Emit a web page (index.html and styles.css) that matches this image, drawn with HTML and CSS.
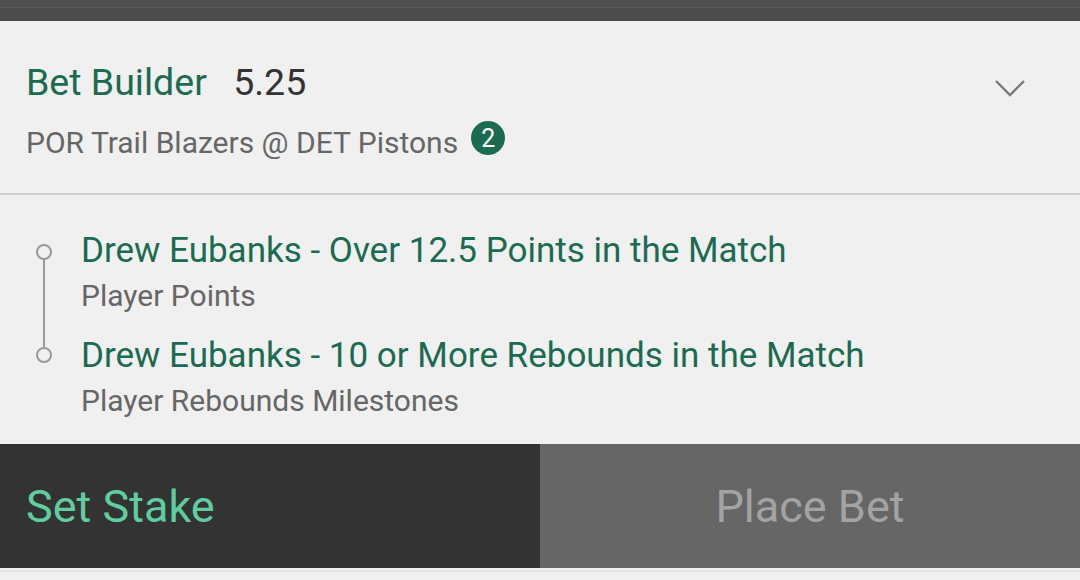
FILE: index.html
```html
<!DOCTYPE html>
<html lang="en">
<head>
  <meta charset="UTF-8" />
  <title>Bet Slip</title>
  <link rel="stylesheet" href="styles.css">
</head>
<body>
  <div class="topbar"></div>

  <div class="bet-header">
    <div class="bet-info">
      <div class="bet-title">
        <span class="bet-name">Bet Builder</span>
        <span class="bet-odds">5.25</span>
      </div>
      <div class="bet-event">
        <span>POR Trail Blazers @ DET Pistons</span>
        <span class="badge">2</span>
      </div>
    </div>
    <svg class="chevron" width="32" height="20" viewBox="0 0 32 20">
      <polyline points="2,3 16,17 30,3" fill="none" stroke="#7a7a7a" stroke-width="2.4"/>
    </svg>
  </div>

  <div class="legs">
    <div class="rail">
      <span class="dot"></span>
      <span class="rail-line"></span>
      <span class="dot"></span>
    </div>
    <div class="leg-list">
      <div class="leg">
        <div class="leg-title">Drew Eubanks - Over 12.5 Points in the Match</div>
        <div class="leg-market">Player Points</div>
      </div>
      <div class="leg">
        <div class="leg-title">Drew Eubanks - 10 or More Rebounds in the Match</div>
        <div class="leg-market">Player Rebounds Milestones</div>
      </div>
    </div>
  </div>

  <div class="actions">
    <button class="btn-stake">Set Stake</button>
    <button class="btn-place">Place Bet</button>
  </div>
  <div class="bottom-strip"></div>
</body>
</html>
```

FILE: styles.css
```css
body {
  margin: 0;
  padding: 0;
  background-color: #f0f0f0;
  font-family: Roboto, 'Noto Sans', sans-serif;
  width: 1080px;
  height: 580px;
  overflow: hidden;
}

.topbar {
  height: 21px;
  background-color: #4b4b4b;
  box-shadow: inset 0 7px 0 #505050, inset 0 8px 0 #5c5c5c;
}

.bet-header {
  display: flex;
  justify-content: space-between;
  align-items: flex-start;
  padding: 39px 54px 32px 26px;
  border-bottom: 2px solid #cfcfcf;
}

.bet-title {
  font-size: 37.5px;
  line-height: 44px;
}

.bet-name {
  color: #1b6b50;
  margin-right: 17px;
}

.bet-odds {
  color: #333333;
}

.bet-event {
  display: flex;
  align-items: flex-start;
  margin-top: 21px;
  font-size: 30px;
  line-height: 36px;
  color: #666666;
}

.badge {
  display: inline-flex;
  align-items: center;
  justify-content: center;
  width: 34px;
  height: 34px;
  margin-left: 13px;
  margin-top: -4px;
  border-radius: 50%;
  background-color: #1b6b50;
  color: #ffffff;
  font-size: 25px;
  line-height: 1;
}

.chevron {
  margin-top: 18px;
}

.legs {
  display: flex;
  padding: 35px 0 25px 36px;
}

.rail {
  display: flex;
  flex-direction: column;
  align-items: center;
  padding-top: 14px;
  margin-right: 29px;
}

.dot {
  width: 12px;
  height: 12px;
  border: 2px solid #9a9a9a;
  border-radius: 50%;
}

.rail-line {
  width: 2px;
  height: 87px;
  background-color: #9a9a9a;
}

.leg + .leg {
  margin-top: 21px;
}

.leg-title {
  font-size: 35px;
  line-height: 42px;
  color: #1b6b50;
}

.leg-market {
  margin-top: 6px;
  font-size: 30px;
  line-height: 36px;
  color: #666666;
}

.actions {
  display: grid;
  grid-template-columns: 1fr 1fr;
  height: 124px;
}

.actions button {
  border: none;
  margin: 0;
  font-family: inherit;
  font-size: 45px;
  cursor: pointer;
}

.btn-stake {
  background-color: #333333;
  color: #5fcd9f;
  text-align: left;
  padding: 0 26px;
}

.btn-place {
  background-color: #666666;
  color: #a3a3a3;
  text-align: center;
  padding: 0;
}

.bottom-strip {
  height: 12px;
  box-shadow: inset 0 2px 0 #f0f0f0, inset 0 4px 0 #e2e2e2;
}
```
